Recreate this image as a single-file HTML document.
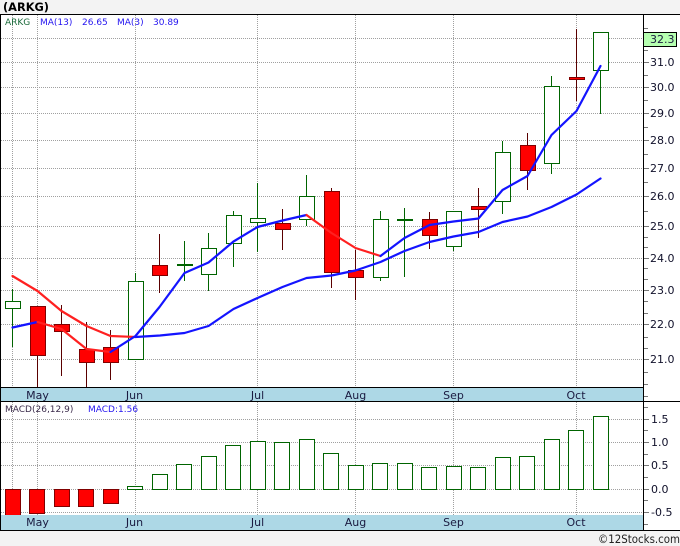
<!DOCTYPE html>
<html><head><meta charset="utf-8"><title>ARKG</title>
<style>
html,body{margin:0;padding:0;background:#f3f3f3;width:680px;height:546px;overflow:hidden}
svg{display:block}
text{font-family:"DejaVu Sans","Liberation Sans",sans-serif}
</style></head><body>
<svg width="680" height="546" viewBox="0 0 680 546" xmlns="http://www.w3.org/2000/svg">
<rect width="680" height="546" fill="#f3f3f3"/>
<rect x="0" y="14" width="680" height="517" fill="#fff"/>
<text x="3" y="11" font-size="11.5" font-weight="bold" fill="#000" textLength="46" lengthAdjust="spacingAndGlyphs">(ARKG)</text>

<g shape-rendering="crispEdges">
<rect x="0" y="388" width="643" height="13" fill="#add8e6"/>
<rect x="0" y="515" width="643" height="15" fill="#add8e6"/>
<g stroke="#a0a0a0" stroke-width="1" stroke-dasharray="1 1" fill="none">
<path d="M1 38.5H643M1 62.5H643M1 87.5H643M1 113.5H643M1 140.5H643M1 168.5H643M1 196.5H643M1 226.5H643M1 258.5H643M1 290.5H643M1 324.5H643M1 359.5H643"/>
<path d="M1 419.5H643M1 442.5H643M1 465.5H643M1 489.5H643M1 512.5H643"/>
<path d="M12.5 15V387M37.5 15V387M135.5 15V387M257.5 15V387M355.5 15V387M453.5 15V387M576.5 15V387"/>
<path d="M12.5 402V515M37.5 402V515M135.5 402V515M257.5 402V515M355.5 402V515M453.5 402V515M576.5 402V515"/>
</g>

<!-- frame -->
<g stroke="#000" stroke-width="1" fill="none">
<path d="M0 14.5H680M0 401.5H680M0 530.5H680M0 387.5H643"/>
<path d="M0.5 14V531M643.5 14V531"/>
</g>

<!-- axis ticks -->
<g stroke="#777" stroke-width="1" fill="none">
<path d="M644 28.5H648M644 50.5H648M644 75.5H648M644 100.5H648M644 127.5H648M644 154.5H648M644 182.5H648M644 211.5H648M644 237.5H648M644 247.5H648M644 268.5H648M644 279.5H648M644 301.5H648M644 313.5H648M644 337.5H648M644 348.5H648M644 372.5H648M644 384.5H648M644 396.5H648"/>
<path d="M644 407.5H648M644 430.5H648M644 454.5H648M644 477.5H648M644 500.5H648M644 524.5H648"/>
<path d="M644 62.5H649M644 87.5H649M644 113.5H649M644 140.5H649M644 168.5H649M644 196.5H649M644 226.5H649M644 258.5H649M644 290.5H649M644 324.5H649M644 359.5H649"/>
<path d="M644 419.5H649M644 442.5H649M644 465.5H649M644 489.5H649M644 512.5H649"/>
</g>

<!-- green candles -->
<g stroke="#006400" stroke-width="1" fill="#fff">
<path d="M12.5 289V347M135.5 273V282M184.5 241V281M208.5 233V291M233.5 211V267M257.5 183V252M306.5 175V226M380.5 211V281M404.5 208V277M453.5 211V251M502.5 141V214M551.5 76V174M600.5 70V114" fill="none"/>
<rect x="5.5" y="301.5" width="15" height="7"/>
<rect x="128.5" y="281.5" width="15" height="78"/>
<rect x="201.5" y="248.5" width="15" height="26"/>
<rect x="226.5" y="215.5" width="15" height="28"/>
<rect x="250.5" y="218.5" width="15" height="4"/>
<rect x="299.5" y="196.5" width="15" height="23"/>
<rect x="373.5" y="219.5" width="15" height="58"/>
<rect x="446.5" y="211.5" width="15" height="35"/>
<rect x="495.5" y="152.5" width="15" height="49"/>
<rect x="544.5" y="86.5" width="15" height="77"/>
<rect x="593.5" y="32.5" width="15" height="38"/>
</g>
<rect x="177" y="264" width="16" height="2" fill="#006400"/>
<rect x="397" y="219" width="16" height="2" fill="#006400"/>

<!-- red candles -->
<g stroke="#800000" stroke-width="1" fill="#ff0000">
<path d="M37.5 306V387M61.5 305V376M86.5 322V387M110.5 330V380M159.5 234V293M282.5 209V250M331.5 188V288M355.5 250V300M429.5 212V249M478.5 188V238M527.5 133V190M576.5 29V101" stroke="#5a0000" fill="none"/>
<rect x="30.5" y="306.5" width="15" height="49"/>
<rect x="54.5" y="324.5" width="15" height="7"/>
<rect x="79.5" y="349.5" width="15" height="13"/>
<rect x="103.5" y="347.5" width="15" height="15"/>
<rect x="152.5" y="265.5" width="15" height="10"/>
<rect x="275.5" y="223.5" width="15" height="6"/>
<rect x="324.5" y="191.5" width="15" height="81"/>
<rect x="348.5" y="270.5" width="15" height="7"/>
<rect x="422.5" y="219.5" width="15" height="16"/>
<rect x="471.5" y="206.5" width="15" height="3"/>
<rect x="520.5" y="145.5" width="15" height="25"/>
<rect x="569.5" y="77.5" width="15" height="2"/>
</g>

<!-- MACD bars -->
<g stroke="#800000" stroke-width="1" fill="#ff0000">
<path d="M5.5 515V489.5H20.5V515"/>
<rect x="29.5" y="489.5" width="15" height="24"/>
<rect x="54.5" y="489.5" width="15" height="17"/>
<rect x="78.5" y="489.5" width="15" height="17"/>
<rect x="103.5" y="489.5" width="15" height="14"/>
</g>
<g stroke="#006400" stroke-width="1" fill="#fff">
<rect x="127.5" y="486.5" width="15" height="3"/>
<rect x="152.5" y="474.5" width="15" height="15"/>
<rect x="176.5" y="464.5" width="15" height="25"/>
<rect x="201.5" y="456.5" width="15" height="33"/>
<rect x="225.5" y="445.5" width="15" height="44"/>
<rect x="250.5" y="441.5" width="15" height="48"/>
<rect x="274.5" y="442.5" width="15" height="47"/>
<rect x="299.5" y="439.5" width="15" height="50"/>
<rect x="323.5" y="453.5" width="15" height="36"/>
<rect x="348.5" y="465.5" width="15" height="24"/>
<rect x="372.5" y="463.5" width="15" height="26"/>
<rect x="397.5" y="463.5" width="15" height="26"/>
<rect x="421.5" y="467.5" width="15" height="22"/>
<rect x="446.5" y="466.5" width="15" height="23"/>
<rect x="470.5" y="467.5" width="15" height="22"/>
<rect x="495.5" y="457.5" width="15" height="32"/>
<rect x="519.5" y="456.5" width="15" height="33"/>
<rect x="544.5" y="439.5" width="15" height="50"/>
<rect x="568.5" y="430.5" width="15" height="59"/>
<rect x="593.5" y="416.5" width="15" height="73"/>
</g>

<rect x="643.5" y="32.5" width="33" height="14" fill="#b6ffb0" stroke="#000" stroke-width="1"/>
</g>

<!-- moving averages -->
<g fill="none" stroke-width="2.2" stroke-linejoin="round" stroke-linecap="round">
<polyline stroke="#ff2020" points="12.5,276 37.5,291 61.5,311 86.5,326 110.5,336 135.5,337"/>
<polyline stroke="#1414ff" points="135.5,337 160,335.5 184.5,333 208.5,326 233.5,309 257.5,298 282.5,287 306.5,278 331.5,275.5 355.5,270.5 380.5,262 404.5,251 429.5,242 453.5,236.5 478.5,232 502.5,222 527.5,216.5 551.5,207 576.5,194.5 600.5,178.5"/>
<polyline stroke="#1414ff" points="12.5,327.5 37.5,322"/>
<polyline stroke="#ff2020" points="37.5,322 61.5,329 86.5,349 110.5,352"/>
<polyline stroke="#1414ff" points="110.5,352 135.5,336 159.5,307 184.5,273 208.5,262.5 233.5,241.5 257.5,227 282.5,220.5 306.5,215"/>
<polyline stroke="#ff2020" points="306.5,215 331.5,233 355.5,248 380.5,256"/>
<polyline stroke="#1414ff" points="380.5,256 404.5,238 429.5,225 453.5,221.5 478.5,218.5 502.5,190 527.5,176 551.5,135 576.5,111 600.5,66"/>
</g>

<!-- legends -->
<g font-size="9">
<text x="5" y="25" fill="#1a6a3a">ARKG</text>
<text x="40" y="25" fill="#2414f0">MA(13)</text>
<text x="82" y="25" fill="#2414f0">26.65</text>
<text x="117" y="25" fill="#2414f0">MA(3)</text>
<text x="153" y="25" fill="#2414f0">30.89</text>
<text x="5" y="412" fill="#3a2a4a">MACD(26,12,9)</text>
<text x="88" y="412" fill="#2414f0">MACD:1.56</text>
</g>

<!-- axis labels -->
<g font-size="11" fill="#10102a">
<text x="650" y="43" fill="#1a1a40">32.3</text>
<text x="650" y="66">31.0</text>
<text x="650" y="91">30.0</text>
<text x="650" y="117">29.0</text>
<text x="650" y="144">28.0</text>
<text x="650" y="172">27.0</text>
<text x="650" y="200">26.0</text>
<text x="650" y="230">25.0</text>
<text x="650" y="262">24.0</text>
<text x="650" y="294">23.0</text>
<text x="650" y="328">22.0</text>
<text x="650" y="363">21.0</text>
<text x="651" y="423">1.5</text>
<text x="651" y="446">1.0</text>
<text x="651" y="469">0.5</text>
<text x="651" y="493">0.0</text>
<text x="651" y="516">-0.5</text>
</g>

<!-- month labels -->
<g font-size="11" fill="#1a1a40" text-anchor="middle">
<text x="37.5" y="399">May</text>
<text x="134.5" y="399">Jun</text>
<text x="257.5" y="399">Jul</text>
<text x="355.5" y="399">Aug</text>
<text x="453.5" y="399">Sep</text>
<text x="576" y="399">Oct</text>
<text x="37.5" y="526">May</text>
<text x="134.5" y="526">Jun</text>
<text x="257.5" y="526">Jul</text>
<text x="355.5" y="526">Aug</text>
<text x="453.5" y="526">Sep</text>
<text x="576" y="526">Oct</text>
</g>

<text x="598" y="543" font-size="11.5" fill="#222" textLength="82" lengthAdjust="spacingAndGlyphs">©12Stocks.com</text>
</svg>
</body></html>
